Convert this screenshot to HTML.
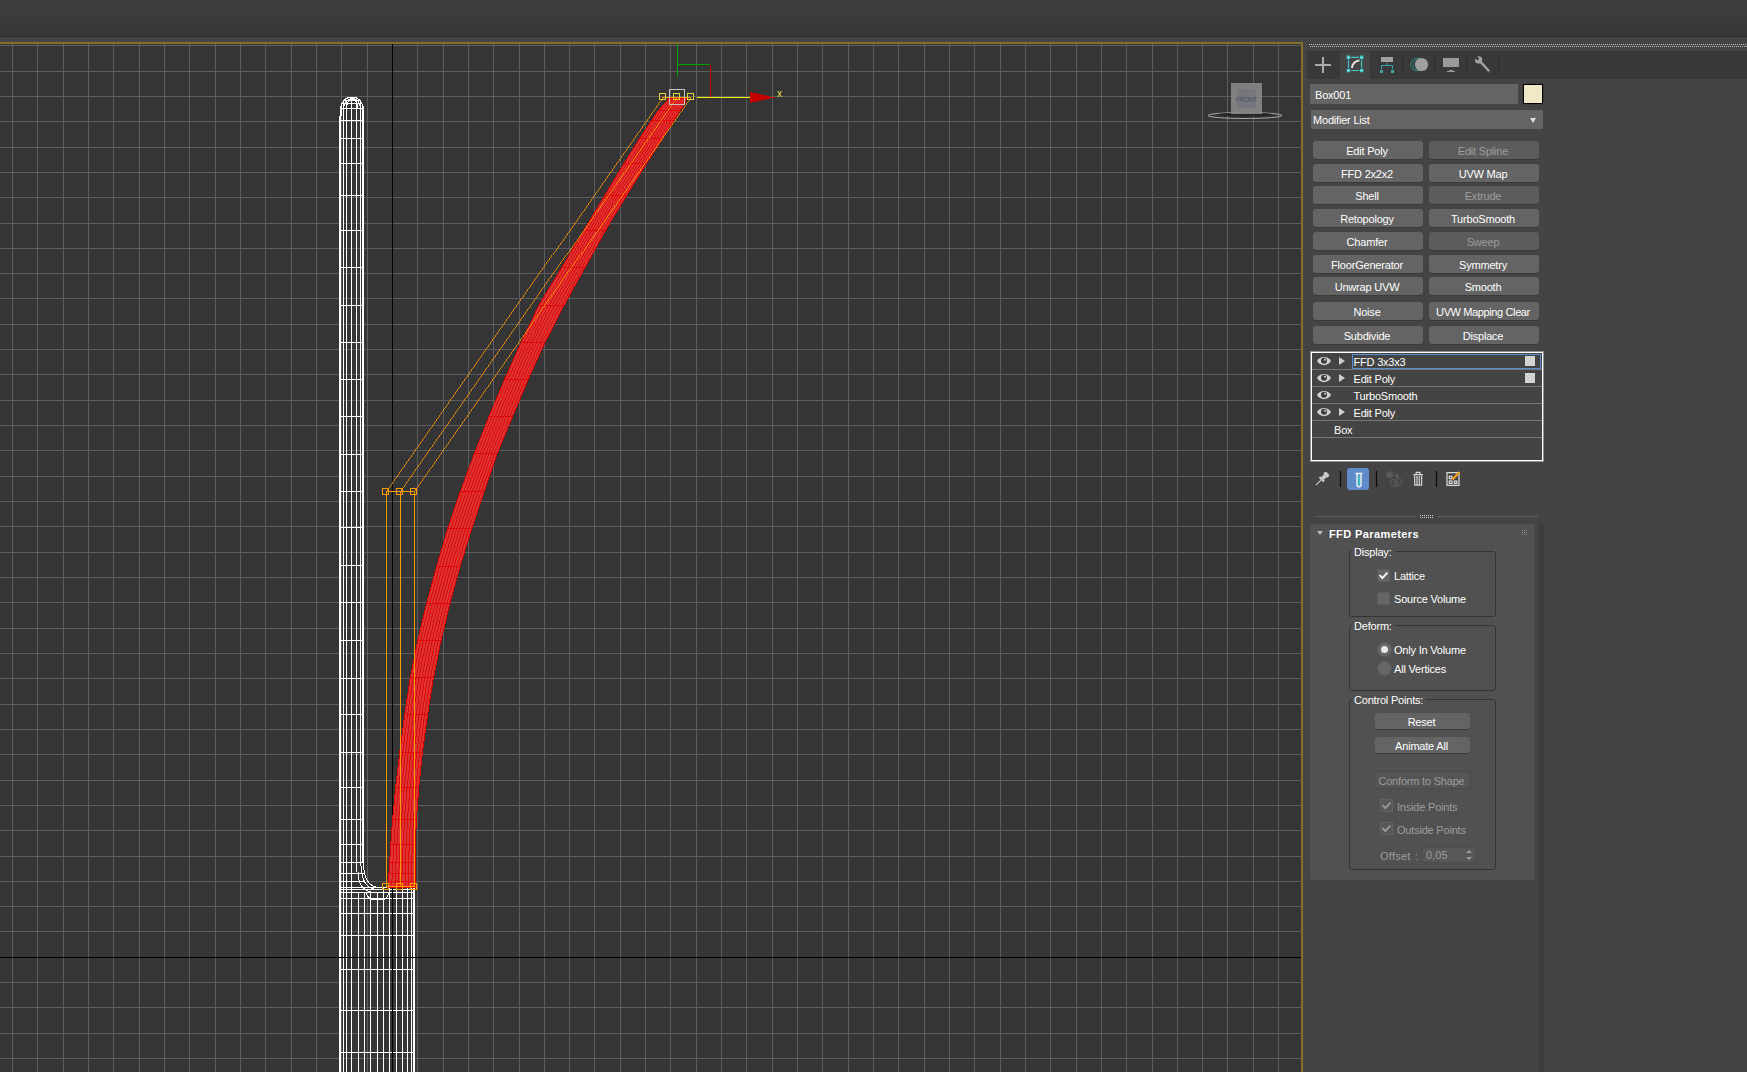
<!DOCTYPE html>
<html lang="en"><head><meta charset="utf-8"><title>3ds Max - FFD Parameters</title>
<style>
*{box-sizing:border-box;margin:0;padding:0}
html,body{width:1747px;height:1072px;overflow:hidden;background:#444}
body{position:relative;font-family:"Liberation Sans",sans-serif;font-size:11px;color:#fff;line-height:13px;letter-spacing:-.2px}
div,span,i,b,svg,label,u{position:absolute;display:block;font-style:normal;font-weight:normal;text-decoration:none}
.top{left:0;top:0;width:1747px;height:36px;background:linear-gradient(#3e3e3e,#373737)}
.topl{left:0;top:36px;width:1747px;height:1px;background:#2b2b2b}
.gold{background:#846f2a}
#vp{left:0;top:44px}
.grip{left:1309px;top:44px;width:438px;height:3px;background:linear-gradient(90deg,#c2c2c2 1px,transparent 1px) 0 0/2px 1px repeat-x,linear-gradient(90deg,#c2c2c2 1px,transparent 1px) 1px 2px/2px 1px repeat-x}
.tabs{left:1307px;top:51px;width:440px;height:28px;background:#393939}
.tabsel{left:1340px;top:52px;width:30px;height:28px;background:#444}
.tsep{top:55px;width:1px;height:19px;background:#2e2e2e}
.ico{overflow:visible}
.fld{background:#646464;border-radius:1px}
.fld span{white-space:nowrap}
.swatch{left:1523px;top:84px;width:20px;height:20px;background:#f0e8c6;border:1px solid #000;box-shadow:0 0 0 1px #3c3c3c}
.dd{right:7px;top:8px;width:0;height:0;border-left:3.5px solid transparent;border-right:3.5px solid transparent;border-top:5px solid #e0e0e0}
.b{padding-right:2px;width:110px;height:18px;background:#646464;border-radius:3px;text-align:center;line-height:20px;white-space:nowrap;box-shadow:0 1px 0 #3a3a3a;color:#fff}
.b.d{background:#5c5c5c;color:#9c9c9c}
.b.s{width:95px;height:16px;line-height:18px}
.b.x{background:#555;color:#9c9c9c;box-shadow:0 0 0 1px #4a4a4a}
.stack{left:1311px;top:352px;width:232px;height:109px;border:1px solid #fff;box-shadow:0 0 0 1px #8e9198;background:#444}
.row{left:0;width:230px;height:17px;border-bottom:1px solid #767676}
.row:nth-child(1){top:0}.row:nth-child(2){top:17px}.row:nth-child(3){top:34px}.row:nth-child(4){top:51px}.row:nth-child(5){top:68px}
.row span{top:3px;white-space:nowrap}
.selbox{left:40px;top:1px;width:189px;height:15px;border:1px solid #5a8ed4}
.sq{left:213px;top:3px;width:10px;height:10px;background:#d4d4d4}
.bluebtn{left:1347px;top:468px;width:22px;height:22px;border-radius:3px;background:#5f8cc8}
.hl{top:516px;height:1px;background:#5e5e5e}
.dots{background-image:radial-gradient(circle at .5px .5px,#d0d0d0 .6px,transparent .8px);background-size:2px 2px}
.sbar{left:1538px;top:524px;width:6px;height:548px;background:#3d3d3d;border-radius:2px 2px 0 0}
.roll{left:1310px;top:524px;width:225px;height:356px;background:#515151;border-radius:3px;box-shadow:0 1px 0 #404040}
.rtri{left:7px;top:7px;width:0;height:0;border-left:3px solid transparent;border-right:3px solid transparent;border-top:4px solid #bdbdbd}
.rt{left:19px;top:4px;font-weight:bold;letter-spacing:.4px;white-space:nowrap}
.rgrip{left:212px;top:6px;width:6px;height:6px;background-image:radial-gradient(circle at .5px .5px,#8a8a8a .6px,transparent .8px);background-size:2px 2px}
.gb{left:39px;width:147px;border:1px solid #343434;border-radius:3px}
.gb label{left:2px;top:-6px;background:#515151;padding:0 3px 0 2px;white-space:nowrap;line-height:13px}
.cb{width:13px;height:13px;background:#666;border:1px solid #5c5c5c}
.cb svg{left:-1px;top:-1px}
.cb.x{background:#575757;border-color:#626262}
.rb{width:15px;height:15px;border-radius:50%;background:#676767;border:1px solid #5a5a5a}
.rb u{left:3px;top:3px;width:7px;height:7px;border-radius:50%;background:#e8e8e8}
.t{white-space:nowrap}
.g{color:#9c9c9c}
.spin{left:112px;top:323px;width:54px;height:16px;background:#575757;border:1px solid #4c4c4c;border-radius:2px}
.spin span{left:3px;top:1px;color:#9c9c9c;letter-spacing:.1px}
.spin i{right:3px;top:2px;width:6px;height:10px;background:linear-gradient(#0000,#0000)}
.spin i:before,.spin i:after{content:"";position:absolute;left:0;border-left:3px solid transparent;border-right:3px solid transparent}
.spin i:before{top:0;border-bottom:3.5px solid #9a9a9a}
.spin i:after{bottom:0;border-top:3.5px solid #9a9a9a}
</style></head><body>
<div class="top"></div><div class="topl"></div>
<div class="gold" style="left:0;top:42px;width:1303px;height:2px"></div>
<div class="gold" style="left:1301px;top:42px;width:2px;height:1030px"></div>
<svg id="vp" width="1301" height="1028" viewBox="0 44 1301 1028" shape-rendering="crispEdges">
<rect x="0" y="44" width="1301" height="1028" fill="#353535"/>
<path d="M12.5 44V1072M37.5 44V1072M63.5 44V1072M88.5 44V1072M113.5 44V1072M139.5 44V1072M164.5 44V1072M189.5 44V1072M215.5 44V1072M240.5 44V1072M265.5 44V1072M291.5 44V1072M316.5 44V1072M341.5 44V1072M367.5 44V1072M417.5 44V1072M443.5 44V1072M468.5 44V1072M493.5 44V1072M519.5 44V1072M544.5 44V1072M569.5 44V1072M594.5 44V1072M620.5 44V1072M645.5 44V1072M670.5 44V1072M696.5 44V1072M721.5 44V1072M746.5 44V1072M772.5 44V1072M797.5 44V1072M822.5 44V1072M848.5 44V1072M873.5 44V1072M898.5 44V1072M924.5 44V1072M949.5 44V1072M974.5 44V1072M1000.5 44V1072M1025.5 44V1072M1050.5 44V1072M1076.5 44V1072M1101.5 44V1072M1126.5 44V1072M1152.5 44V1072M1177.5 44V1072M1202.5 44V1072M1227.5 44V1072M1253.5 44V1072M1278.5 44V1072M0 45.5H1301M0 71.5H1301M0 96.5H1301M0 121.5H1301M0 147.5H1301M0 172.5H1301M0 197.5H1301M0 223.5H1301M0 248.5H1301M0 273.5H1301M0 298.5H1301M0 324.5H1301M0 349.5H1301M0 374.5H1301M0 400.5H1301M0 425.5H1301M0 450.5H1301M0 476.5H1301M0 501.5H1301M0 526.5H1301M0 552.5H1301M0 577.5H1301M0 602.5H1301M0 628.5H1301M0 653.5H1301M0 678.5H1301M0 704.5H1301M0 729.5H1301M0 754.5H1301M0 780.5H1301M0 805.5H1301M0 830.5H1301M0 856.5H1301M0 881.5H1301M0 906.5H1301M0 931.5H1301M0 982.5H1301M0 1007.5H1301M0 1033.5H1301M0 1058.5H1301" stroke="#5d5d5d" stroke-width="1" fill="none"/>
<path d="M340 108.5H364M339 120.5H364M339 138.5H364M339 163.5H364M339 195.5H364M339 230.5H364M339 267.5H364M339 305.5H364M339 342.5H364M339 379.5H364M339 416.5H364M339 454.5H364M339 491.5H364M339 527.5H364M339 565.5H364M339 602.5H364M339 640.5H364M339 678.5H364M339 714.5H364M339 752.5H364M339 787.5H364M339 819.5H364M339 844.5H364M339 862.5H364M339 873.5H364M339 881.5H364M343.5 100V1072M346.5 100V1072M351.5 100V1072M356.5 100V872M360.5 100V866M341 109C341 93 363 93 363 109M343.5 109C344 95 360.5 95 360.5 109M346.5 108C347 96 357.5 96 357.5 108M342 103.5H362M344 100.5H360M339 887.5H415M339 889.5H415M339 892.5H415M339 898.5H415M339 913.5H415M339 935.5H415M339 969.5H415M339 1010.5H415M339 1052.5H415M358.5 892V1072M364.5 892V1072M370.5 892V1072M377.5 892V1072M383.5 888V1072M389.5 888V1072M396.5 888V1072M402.5 888V1072M407.5 888V1072M411.5 888V1072M363.5 862C363.5 880 369 887.5 380 887.5M361.5 866C361.5 882 367 889.5 378 889.5M358 872C358 886 364 892.5 376 892.5M366 892C367 897 370 899.5 374 899.5H382C386 899.5 388 897 389 892" stroke="#fff" stroke-width="1" fill="none"/>
<path d="M341 106V116M340 116V1072M363 106V862M414 888V1072" stroke="#fff" stroke-width="2" fill="none"/>
<path d="M392.5 44V1072M0 957.5H1301" stroke="#000" stroke-width="1" fill="none"/>
<path d="M669.5 98 L666 101.8 L658.6 110.2 L651.8 120.3 L639.6 138.5 L624.2 163.3 L604.6 195.8 L584.1 230 L561.8 267.5 L538.9 305.3 L521.2 342.5 L504.8 379.1 L489.1 416.3 L474.4 453.5 L460.4 491.4 L447.8 528.2 L436.6 566.6 L426.7 603.2 L417.8 640.1 L410.3 677.4 L404.7 714.9 L399.7 752.8 L395.7 787.1 L392.6 819.4 L390.8 844.2 L389.7 862.3 L389 873.5 L388.5 881.9 L388 887 L415.5 887 L415 881.9 L415 873.5 L415 862.3 L415.4 844.2 L416.4 819.4 L418.8 787.1 L422.4 752.8 L427.5 714.9 L433.5 677.4 L441.1 640.1 L449.9 603.2 L460 566.6 L471.9 528.2 L484.2 491.4 L497.2 453.5 L512.6 416.3 L528.3 379.1 L544.9 342.5 L564.1 305.3 L585 267.5 L605.8 230 L626.4 195.8 L646.6 163.3 L662.6 138.5 L673.9 120.3 L680.4 110.2 L685.6 101.8 L686.5 98 Z" fill="#de3333" stroke="#dc0000" stroke-width="1"/>
<path d="M671.6 98 L668.5 101.8 L661.3 110.2 L654.6 120.3 L642.5 138.5 L627 163.3 L607.3 195.8 L586.8 230 L564.7 267.5 L542 305.3 L524.2 342.5 L507.7 379.1 L492 416.3 L477.2 453.5 L463.4 491.4 L450.8 528.2 L439.5 566.6 L429.6 603.2 L420.7 640.1 L413.2 677.4 L407.6 714.9 L402.5 752.8 L398.6 787.1 L395.6 819.4 L393.9 844.2 L392.9 862.3 L392.2 873.5 L391.8 881.9 L391.4 887M673.8 98 L670.9 101.8 L664 110.2 L657.3 120.3 L645.4 138.5 L629.8 163.3 L610 195.8 L589.5 230 L567.6 267.5 L545.2 305.3 L527.1 342.5 L510.7 379.1 L495 416.3 L480.1 453.5 L466.3 491.4 L453.8 528.2 L442.5 566.6 L432.5 603.2 L423.6 640.1 L416.1 677.4 L410.4 714.9 L405.4 752.8 L401.5 787.1 L398.6 819.4 L396.9 844.2 L396 862.3 L395.5 873.5 L395.1 881.9 L394.9 887M675.9 98 L673.4 101.8 L666.8 110.2 L660.1 120.3 L648.2 138.5 L632.6 163.3 L612.8 195.8 L592.2 230 L570.5 267.5 L548.4 305.3 L530.1 342.5 L513.6 379.1 L497.9 416.3 L482.9 453.5 L469.3 491.4 L456.8 528.2 L445.4 566.6 L435.4 603.2 L426.5 640.1 L419 677.4 L413.2 714.9 L408.2 752.8 L404.4 787.1 L401.5 819.4 L400 844.2 L399.2 862.3 L398.8 873.5 L398.4 881.9 L398.3 887M678 98 L675.8 101.8 L669.5 110.2 L662.8 120.3 L651.1 138.5 L635.4 163.3 L615.5 195.8 L595 230 L573.4 267.5 L551.5 305.3 L533 342.5 L516.5 379.1 L500.9 416.3 L485.8 453.5 L472.3 491.4 L459.9 528.2 L448.3 566.6 L438.3 603.2 L429.5 640.1 L421.9 677.4 L416.1 714.9 L411 752.8 L407.2 787.1 L404.5 819.4 L403.1 844.2 L402.4 862.3 L402 873.5 L401.8 881.9 L401.8 887M680.1 98 L678.2 101.8 L672.2 110.2 L665.6 120.3 L654 138.5 L638.2 163.3 L618.2 195.8 L597.7 230 L576.3 267.5 L554.6 305.3 L536 342.5 L519.5 379.1 L503.8 416.3 L488.6 453.5 L475.3 491.4 L462.9 528.2 L451.2 566.6 L441.2 603.2 L432.4 640.1 L424.8 677.4 L418.9 714.9 L413.9 752.8 L410.1 787.1 L407.5 819.4 L406.2 844.2 L405.5 862.3 L405.2 873.5 L405.1 881.9 L405.2 887M682.2 98 L680.7 101.8 L675 110.2 L668.4 120.3 L656.9 138.5 L641 163.3 L621 195.8 L600.4 230 L579.2 267.5 L557.8 305.3 L539 342.5 L522.4 379.1 L506.7 416.3 L491.5 453.5 L478.2 491.4 L465.9 528.2 L454.1 566.6 L444.1 603.2 L435.3 640.1 L427.7 677.4 L421.8 714.9 L416.7 752.8 L413 787.1 L410.4 819.4 L409.2 844.2 L408.7 862.3 L408.5 873.5 L408.4 881.9 L408.6 887M684.4 98 L683.1 101.8 L677.7 110.2 L671.1 120.3 L659.7 138.5 L643.8 163.3 L623.7 195.8 L603.1 230 L582.1 267.5 L561 305.3 L541.9 342.5 L525.4 379.1 L509.7 416.3 L494.3 453.5 L481.2 491.4 L468.9 528.2 L457.1 566.6 L447 603.2 L438.2 640.1 L430.6 677.4 L424.6 714.9 L419.6 752.8 L415.9 787.1 L413.4 819.4 L412.3 844.2 L411.8 862.3 L411.8 873.5 L411.7 881.9 L412.1 887M658.6 110.2L680.4 110.2M651.8 120.3L673.9 120.3M639.6 138.5L662.6 138.5M624.2 163.3L646.6 163.3M604.6 195.8L626.4 195.8M584.1 230L605.8 230M561.8 267.5L585 267.5M538.9 305.3L564.1 305.3M521.2 342.5L544.9 342.5M504.8 379.1L528.3 379.1M489.1 416.3L512.6 416.3M474.4 453.5L497.2 453.5M460.4 491.4L484.2 491.4M447.8 528.2L471.9 528.2M436.6 566.6L460 566.6M426.7 603.2L449.9 603.2M417.8 640.1L441.1 640.1M410.3 677.4L433.5 677.4M404.7 714.9L427.5 714.9M399.7 752.8L422.4 752.8M395.7 787.1L418.8 787.1M392.6 819.4L416.4 819.4M390.8 844.2L415.4 844.2M389.7 862.3L415 862.3M389 873.5L415 873.5M388.5 881.9L415 881.9" stroke="#dc0000" stroke-width=".75" fill="none"/>
<path d="M662.5 97.5L386.5 491.5M676.5 97.5L400.5 491.5M690.5 97.5L414.5 491.5" stroke="#ff9a00" stroke-width=".8" fill="none"/>
<path d="M386.5 491.5V886.5M400.5 491.5V886.5M414.5 491.5V886.5M662 97.5H691M386 491.5H414M386 886.5H414" stroke="#ff9a00" stroke-width="1" fill="none"/>
<path d="M382.5 488.5h6v6h-6zM382.5 883.5h6v6h-6zM396.5 488.5h6v6h-6zM396.5 883.5h6v6h-6zM410.5 488.5h6v6h-6zM410.5 883.5h6v6h-6z" stroke="#ff9a00" stroke-width="1" fill="none"/>
<path d="M659.5 93.5h6v6h-6zM673.5 93.5h6v6h-6zM687.5 93.5h6v6h-6z" stroke="#e2d43c" stroke-width="1" fill="none"/>
<rect x="669.5" y="89.5" width="15" height="15" stroke="#c4c4c4" fill="none"/>
<path d="M677.5 44V77M677 64.5H710" stroke="#00a000" fill="none"/>
<path d="M710.5 65V97" stroke="#c00000" fill="none"/>
<path d="M697 97.5H751" stroke="#f4f000" fill="none"/>
<path d="M750 92V103L775 97.5z" fill="#c40000"/>
<text x="777" y="97" font-family="Liberation Sans, sans-serif" font-size="10" fill="#e8e040">x</text>
<g shape-rendering="auto">
<ellipse cx="1245" cy="115.5" rx="37" ry="3" fill="none" stroke="#c8ccd0" stroke-width="1" opacity=".75"/>
<ellipse cx="1245" cy="114.5" rx="28" ry="2" fill="#242424" opacity=".8"/>
<rect x="1231" y="83" width="31" height="31" fill="#868686" opacity=".93"/>
<rect x="1237" y="89" width="19" height="19" fill="#75777c"/>
<text x="1236" y="101.7" font-family="Liberation Sans, sans-serif" font-size="7.5" fill="#484c5a" textLength="21" lengthAdjust="spacingAndGlyphs">FRONT</text>
</g>
</svg>
<!-- command panel -->
<div class="grip"></div>
<div class="tabs"></div>
<div class="tabsel"></div>
<div class="tsep" style="left:1402px"></div><div class="tsep" style="left:1434px"></div><div class="tsep" style="left:1466px"></div><div class="tsep" style="left:1498px"></div>
<svg class="ico" style="left:1307px;top:51px" width="200" height="28" viewBox="1307 51 200 28">
 <!-- create -->
 <path d="M1315 65H1331M1323 57V73" stroke="#acacac" stroke-width="2" fill="none"/>
 <!-- modify -->
 <path d="M1351.300 57.400H1358.800M1351.300 70.500H1358.800M1348.500 60.200V67.800M1361.600 60.200V67.800" stroke="#3fc6c8" stroke-width="1.200" fill="none"/>
 <path d="M1346.700 55.600h3.600v3.600h-3.600zM1359.800 55.600h3.600v3.600h-3.600zM1346.700 68.700h3.600v3.600h-3.600zM1359.800 68.700h3.600v3.600h-3.600z" fill="#3fc6c8"/>
 <path d="M1348 56.900h1v1h-1zM1361.100 56.900h1v1h-1zM1348 70h1v1h-1zM1361.100 70h1v1h-1z" fill="#e6ffff"/>
 <path d="M1352 68C1352 64 1355.500 60.500 1359.500 60.500" stroke="#e4e4e4" stroke-width="2" fill="none"/>
 <!-- hierarchy -->
 <rect x="1381" y="57" width="12" height="5" fill="#a0a0a0"/>
 <path d="M1387 63V65.500M1381.500 69V65.500H1392.500V69" stroke="#38a6aa" stroke-width="1" fill="none"/>
 <rect x="1380" y="70" width="3" height="3" fill="#38a6aa"/><rect x="1391" y="70" width="3" height="3" fill="#38a6aa"/>
 <!-- motion -->
 <circle cx="1416.700" cy="64.500" r="6.200" fill="none" stroke="#2a8c90" stroke-width=".8"/>
 <circle cx="1419" cy="64.500" r="6.200" fill="none" stroke="#2a8c90" stroke-width=".8"/>
 <circle cx="1421.500" cy="64.500" r="6.600" fill="#a0a0a0"/>
 <!-- display -->
 <rect x="1443" y="58" width="16" height="9" fill="#9a9a9a"/>
 <path d="M1447 71.500H1455M1449 70.500H1453" stroke="#9a9a9a" stroke-width="1" fill="none"/>
 <!-- utilities -->
 <path d="M1480 61.300L1489.200 71.200" stroke="#a2a2a2" stroke-width="2.400" stroke-linecap="round" fill="none"/>
 <circle cx="1478.600" cy="59.900" r="3.600" fill="#a2a2a2"/>
 <path d="M1478.300 59.500L1474 55.200" stroke="#393939" stroke-width="2.600" fill="none"/>
 <circle cx="1489.400" cy="71.500" r=".8" fill="#393939"/>
</svg>

<div class="fld" style="left:1310px;top:84px;width:208px;height:20px"><span style="left:5px;top:5px">Box001</span></div>
<div class="swatch"></div>
<div class="fld" style="left:1311px;top:110px;width:232px;height:19px"><span style="left:2px;top:4px">Modifier List</span><i class="dd"></i></div>

<div class="b" style="left:1313px;top:141px">Edit Poly</div><div class="b d" style="left:1429px;top:141px">Edit Spline</div>
<div class="b" style="left:1313px;top:164px">FFD 2x2x2</div><div class="b" style="left:1429px;top:164px">UVW Map</div>
<div class="b" style="left:1313px;top:186px">Shell</div><div class="b d" style="left:1429px;top:186px">Extrude</div>
<div class="b" style="left:1313px;top:209px">Retopology</div><div class="b" style="left:1429px;top:209px">TurboSmooth</div>
<div class="b" style="left:1313px;top:232px">Chamfer</div><div class="b d" style="left:1429px;top:232px">Sweep</div>
<div class="b" style="left:1313px;top:255px">FloorGenerator</div><div class="b" style="left:1429px;top:255px">Symmetry</div>
<div class="b" style="left:1313px;top:277px">Unwrap UVW</div><div class="b" style="left:1429px;top:277px">Smooth</div>
<div class="b" style="left:1313px;top:302px">Noise</div><div class="b" style="left:1429px;top:302px;letter-spacing:-.38px">UVW Mapping Clear</div>
<div class="b" style="left:1313px;top:326px">Subdivide</div><div class="b" style="left:1429px;top:326px">Displace</div>

<!-- modifier stack -->
<div class="stack">
 <div class="row"><span style="left:41.500px">FFD 3x3x3</span><b class="selbox"></b><i class="sq"></i></div>
 <div class="row"><span style="left:41.500px">Edit Poly</span><i class="sq"></i></div>
 <div class="row"><span style="left:41.500px">TurboSmooth</span></div>
 <div class="row"><span style="left:41.500px">Edit Poly</span></div>
 <div class="row"><span style="left:22px">Box</span></div>
</div>
<svg class="ico" style="left:1312px;top:353px" width="40" height="70" viewBox="1312 353 40 70">
 <defs><g id="eye"><path d="M1317 361C1320 355.500 1328 355.500 1331 361C1328 366.500 1320 366.500 1317 361Z" fill="#d2d2d2"/><circle cx="1324" cy="360.700" r="3" fill="#3a3a3a"/><circle cx="1325" cy="359.800" r="1" fill="#d2d2d2"/></g>
 <path id="tri" d="M1339 357V365L1345 361Z" fill="#d0d0d0"/></defs>
 <use href="#eye"/><use href="#eye" y="17"/><use href="#eye" y="34"/><use href="#eye" y="51"/>
 <use href="#tri"/><use href="#tri" y="17"/><use href="#tri" y="51"/>
</svg>

<!-- stack toolbar -->
<div class="bluebtn"></div>
<svg class="ico" style="left:1310px;top:466px" width="160" height="26" viewBox="1310 466 160 26">
 <path d="M1340.500 471V487M1376.500 471V487M1436.500 471V487" stroke="#0c0c0c" stroke-width="1.300" fill="none"/>
 <!-- pin -->
 <g transform="translate(1315.800 485.200) rotate(-45)" fill="#cacaca"><rect x="0" y="-.55" width="8" height="1.100"/><rect x="7.300" y="-3.300" width="2.300" height="6.600" rx=".8"/><rect x="9.400" y="-1.900" width="4" height="3.800"/><rect x="13" y="-2.900" width="3.800" height="5.800" rx="1.200"/></g>
 <!-- test tube -->
 <path d="M1355.500 473.500H1362.500M1357 474V485.500Q1359 488 1361 485.500V474" stroke="#f2f2f2" stroke-width="1.400" fill="none"/>
 <path d="M1358.300 475.500H1359.900V485.500H1358.300Z" fill="#35c3c0"/>
 <!-- make unique -->
 <g fill="none" stroke="#5a5a5a" stroke-width="1.200"><circle cx="1394" cy="483" r="3.500"/><circle cx="1398" cy="482" r="3.500"/><path d="M1394 475.500H1398V479M1396 474L1398 475.500L1396 477"/></g>
 <circle cx="1389.700" cy="474.800" r="3.500" fill="#5a5a5a"/>
 <!-- trash -->
 <g fill="none" stroke="#d4d4d4" stroke-width="1.200"><path d="M1413.300 474.600H1422.900M1416.200 474V472.300H1420V474M1414.700 475.500V485.200H1421.600V475.500M1417 476V485M1419.300 476V485"/></g>
 <!-- configure -->
 <g fill="none" stroke="#dcdcdc" stroke-width="1.200"><path d="M1447 472.600H1459V485.400H1447Z"/><rect x="1449.300" y="476.300" width="2.600" height="2.400"/><rect x="1449.300" y="481" width="2.600" height="2.400"/><rect x="1454.300" y="481" width="2.600" height="2.400"/></g>
 <path d="M1452.500 479.500L1459.500 472" stroke="#f2a01e" stroke-width="2.200" fill="none"/>
</svg>

<!-- divider -->
<div class="hl" style="left:1315px;width:102px"></div><div class="hl" style="left:1437px;width:101px"></div>
<div class="dots" style="left:1420px;top:515px;width:13px;height:3px"></div>

<!-- rollout -->
<div class="sbar"></div>
<div class="roll">
 <i class="rtri"></i><span class="rt">FFD Parameters</span><i class="rgrip"></i>
 <div class="gb" style="top:27px;height:66px"><label>Display:</label></div>
 <div class="gb" style="top:101px;height:66px"><label>Deform:</label></div>
 <div class="gb" style="top:175px;height:171px"><label>Control Points:</label></div>
 <i class="cb" style="left:67px;top:45px"><svg width="13" height="13" viewBox="0 0 13 13"><path d="M2.600 6L5.300 9.100L10.400 3.600" stroke="#fff" stroke-width="1.900" fill="none"/></svg></i><span class="t" style="left:84px;top:46px">Lattice</span>
 <i class="cb" style="left:67px;top:68px"></i><span class="t" style="left:84px;top:69px">Source Volume</span>
 <i class="rb" style="left:67px;top:118px"><u></u></i><span class="t" style="left:84px;top:120px">Only In Volume</span>
 <i class="rb" style="left:67px;top:137px"></i><span class="t" style="left:84px;top:139px">All Vertices</span>
 <div class="b s" style="left:65px;top:189px">Reset</div>
 <div class="b s" style="left:65px;top:213px">Animate All</div>
 <div class="b s x" style="left:65px;top:248px">Conform to Shape</div>
 <i class="cb x" style="left:70px;top:275px"><svg width="13" height="13" viewBox="0 0 13 13"><path d="M2.600 6L5.300 9.100L10.400 3.600" stroke="#9a9a9a" stroke-width="1.900" fill="none"/></svg></i><span class="t g" style="left:87px;top:277px">Inside Points</span>
 <i class="cb x" style="left:70px;top:298px"><svg width="13" height="13" viewBox="0 0 13 13"><path d="M2.600 6L5.300 9.100L10.400 3.600" stroke="#9a9a9a" stroke-width="1.900" fill="none"/></svg></i><span class="t g" style="left:87px;top:300px">Outside Points</span>
 <span class="t g" style="left:70px;top:326px;letter-spacing:.25px;word-spacing:1px">Offset :</span>
 <div class="spin"><span>0,05</span><i></i></div>
</div>
</body></html>
